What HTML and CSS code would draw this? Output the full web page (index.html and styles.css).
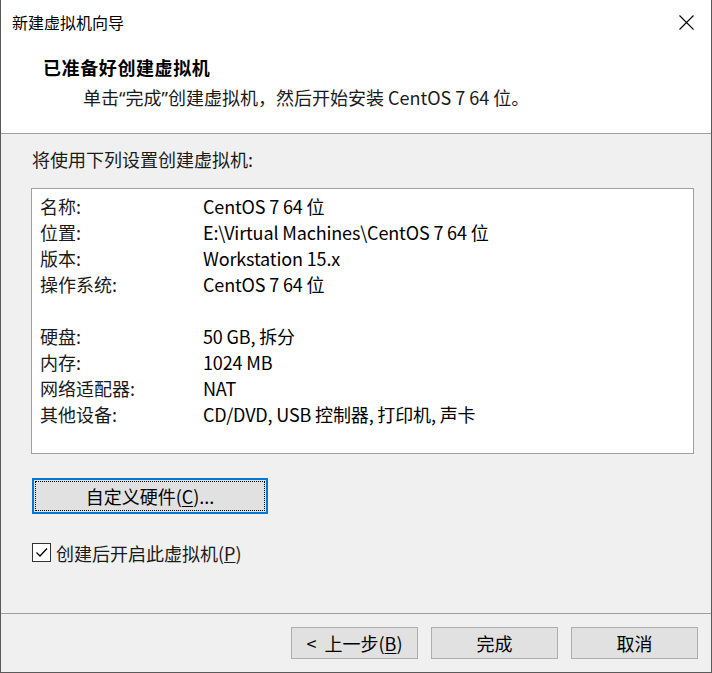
FILE: index.html
```html
<!DOCTYPE html>
<html lang="zh-CN">
<head>
<meta charset="utf-8">
<title>新建虚拟机向导</title>
<link rel="stylesheet" href="styles.css">
</head>
<body>
<div class="window">
  <div class="titlebar">
    <span class="title">新建虚拟机向导</span>
    <span class="close"><svg width="15" height="15" viewBox="0 0 15 15"><path d="M0.5 0.5 L14.5 14.5 M14.5 0.5 L0.5 14.5" stroke="#000" stroke-width="1.1" fill="none"/></svg></span>
  </div>
  <div class="header">
    <div class="headline">已准备好创建虚拟机</div>
    <div class="subline">单击<span class="q">“</span>完成<span class="q">”</span>创建虚拟机，然后开始安装 CentOS 7 64 位。</div>
  </div>
  <div class="content">
    <div class="intro">将使用下列设置创建虚拟机:</div>
    <div class="listbox">
      <div class="row"><span class="key">名称:</span><span class="val">CentOS 7 64 位</span></div>
      <div class="row"><span class="key">位置:</span><span class="val">E:\Virtual Machines\CentOS 7 64 位</span></div>
      <div class="row"><span class="key">版本:</span><span class="val">Workstation 15.x</span></div>
      <div class="row"><span class="key">操作系统:</span><span class="val">CentOS 7 64 位</span></div>
      <div class="row"></div>
      <div class="row"><span class="key">硬盘:</span><span class="val">50 GB, 拆分</span></div>
      <div class="row"><span class="key">内存:</span><span class="val">1024 MB</span></div>
      <div class="row"><span class="key">网络适配器:</span><span class="val">NAT</span></div>
      <div class="row"><span class="key">其他设备:</span><span class="val">CD/DVD, USB 控制器, 打印机, 声卡</span></div>
    </div>
    <button class="btn custom"><span class="focus">自定义硬件(<u>C</u>)...</span></button>
    <div class="check">
      <span class="box"><svg width="17" height="17" viewBox="0 0 17 17"><path d="M3.5 8.5 L7 12 L14 4.5" stroke="#000" stroke-width="1.3" fill="none"/></svg></span>
      <span class="check-label">创建后开启此虚拟机(<u>P</u>)</span>
    </div>
  </div>
  <div class="footer">
    <button class="btn">&lt;&nbsp; 上一步(<u>B</u>)</button>
    <button class="btn">完成</button>
    <button class="btn">取消</button>
  </div>
</div>
</body>
</html>
```
FILE: styles.css
```css
* { box-sizing: border-box; }
html, body { margin: 0; padding: 0; }
body {
  width: 712px;
  height: 673px;
  overflow: hidden;
  font-family: "Noto Sans CJK SC", "Noto Sans", sans-serif;
  font-size: 18px;
  color: #000;
  background: #f0f0f0;
}
.window {
  width: 712px;
  height: 673px;
  display: flex;
  flex-direction: column;
  background: #f0f0f0;
  border-left: 1px solid #5a5a5a;
  border-right: 1px solid #5a5a5a;
  border-bottom: 1px solid #5a5a5a;
}
.titlebar {
  height: 44px;
  background: #fff;
  display: flex;
  align-items: center;
  justify-content: space-between;
  padding: 0 17px 0 11px;
}
.title {
  font-size: 16px;
  line-height: 44px;
  color: #000;
}
.close { display: flex; width: 15px; height: 15px; }
.header {
  background: #fff;
  height: 90px;
  padding: 11px 0 0 42px;
  border-bottom: 1px solid #a0a0a0;
}
.headline {
  font-weight: bold;
  line-height: 24px;
  letter-spacing: 0.6px;
}
.subline {
  margin-top: 6px;
  padding-left: 40px;
  line-height: 24px;
  color: #1a1a1a;
}
.q { font-family: "Noto Sans", sans-serif; }
.content {
  flex: 1;
  padding: 13px 0 0 30px;
  display: flex;
  flex-direction: column;
  align-items: flex-start;
}
.intro {
  line-height: 24px;
  padding-left: 1px;
  color: #1a1a1a;
}
.listbox {
  margin-top: 17px;
  width: 663px;
  height: 266px;
  background: #fff;
  border: 1px solid #a0a0a0;
  padding: 4px 0 0 8px;
}
.row {
  height: 26px;
  line-height: 26px;
  display: flex;
}
.key { width: 163px; color: #1a1a1a; }
.val { color: #000; letter-spacing: -0.15px; }
.btn {
  font-family: inherit;
  font-size: 18px;
  color: #000;
  background: #e1e1e1;
  border: 1px solid #adadad;
  width: 127px;
  height: 32px;
  padding: 0;
  display: flex;
  align-items: center;
  justify-content: center;
  line-height: 24px;
}
.btn u { text-underline-offset: 2px; }
.custom {
  margin-top: 24px;
  margin-left: 1px;
  width: 236px;
  height: 36px;
  border: 2px solid #0078d7;
  padding: 1px;
}
.focus {
  width: 100%;
  height: 100%;
  display: flex;
  align-items: center;
  justify-content: center;
  outline: 1px dotted #000;
  outline-offset: -1px;
}
.check {
  margin-top: 29px;
  margin-left: 1px;
  display: flex;
  align-items: center;
  height: 19px;
}
.box {
  width: 19px;
  height: 19px;
  border: 1px solid #333;
  background: #fff;
  display: flex;
  align-items: center;
  justify-content: center;
}
.check-label {
  margin-left: 5px;
  line-height: 24px;
  color: #1a1a1a;
}
.footer {
  height: 59px;
  border-top: 1px solid #a0a0a0;
  display: flex;
  justify-content: flex-end;
  align-items: flex-start;
  gap: 13px;
  padding: 13px 13px 0 0;
}
```
